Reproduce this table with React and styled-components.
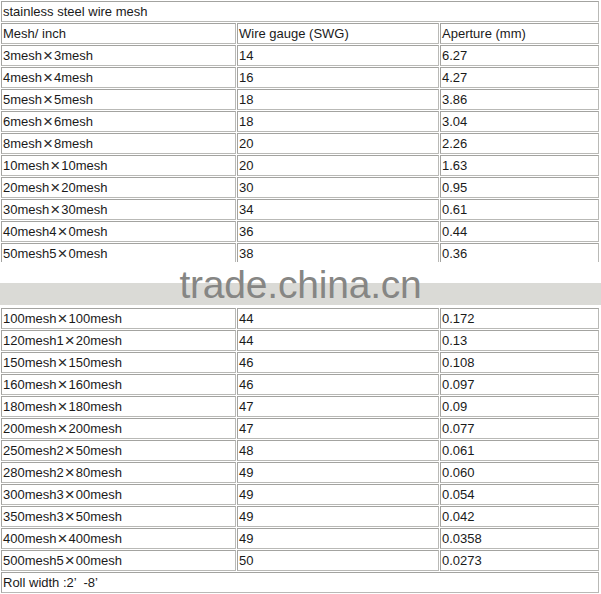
import React from 'react';
import styled, { createGlobalStyle } from 'styled-components';

const GlobalStyle = createGlobalStyle`
    html, body {
        margin: 0;
        padding: 0;
        background: #ffffff;
    }
    body {
        font-family: "Liberation Sans", Arial, sans-serif;
        color: #1a1a1a;
    }
`;

const Page = styled.div`
    width: 601px;
    height: 594px;
    overflow: hidden;
    display: flex;
    flex-direction: column;
    background: #ffffff;
`;

// crops the top table so the last row runs into the watermark
const Clip = styled.div`
    height: ${({h}) => h}px;
    overflow: hidden;
    flex-shrink: 0;
`;

const Grid = styled.div`
    display: grid;
    grid-template-columns: 235px 202px 159px;
    grid-auto-rows: 21px;
    gap: 1px;
    padding: 1px;
    width: 600px;
    box-sizing: border-box;
`;

const Cell = styled.div`
    grid-column: ${({span}) => span ? `span ${span}` : 'auto'};
    box-sizing: border-box;
    border: 1px solid #b9b9b6;
    border-top-color: #a3a3a0;
    border-left-color: #a3a3a0;
    background: #ffffff;
    padding: 0 0 1px 1px;
    display: flex;
    align-items: center;
    font-size: 13px;
    line-height: 15px;
    white-space: pre;
`;

const Times = styled.span`
    display: inline-block;
    width: 12px;
    text-align: center;
    font-size: 17px;
    line-height: 13px;
    font-weight: 300;
    color: #2a2a2a;
    vertical-align: -1px;
`;

const Watermark = styled.div`
    position: relative;
    height: 45px;
    flex-shrink: 0;
    display: flex;
    flex-direction: column;
`;

const WhitePart = styled.div`
    height: ${({h}) => h}px;
    background: #ffffff;
`;

const GrayBand = styled.div`
    height: 22px;
    background: #dadad6;
`;

const MarkText = styled.div`
    position: absolute;
    left: 0;
    right: 0;
    top: 3px;
    text-align: center;
    font-family: "Liberation Sans", Arial, sans-serif;
    font-size: 39px;
    line-height: 39px;
    color: #868684;
    letter-spacing: -0.2px;
`;

const topRows = [
    ['3mesh×3mesh', '14', '6.27'],
    ['4mesh×4mesh', '16', '4.27'],
    ['5mesh×5mesh', '18', '3.86'],
    ['6mesh×6mesh', '18', '3.04'],
    ['8mesh×8mesh', '20', '2.26'],
    ['10mesh×10mesh', '20', '1.63'],
    ['20mesh×20mesh', '30', '0.95'],
    ['30mesh×30mesh', '34', '0.61'],
    ['40mesh4×0mesh', '36', '0.44'],
    ['50mesh5×0mesh', '38', '0.36'],
];

const bottomRows = [
    ['100mesh×100mesh', '44', '0.172'],
    ['120mesh1×20mesh', '44', '0.13'],
    ['150mesh×150mesh', '46', '0.108'],
    ['160mesh×160mesh', '46', '0.097'],
    ['180mesh×180mesh', '47', '0.09'],
    ['200mesh×200mesh', '47', '0.077'],
    ['250mesh2×50mesh', '48', '0.061'],
    ['280mesh2×80mesh', '49', '0.060'],
    ['300mesh3×00mesh', '49', '0.054'],
    ['350mesh3×50mesh', '49', '0.042'],
    ['400mesh×400mesh', '49', '0.0358'],
    ['500mesh5×00mesh', '50', '0.0273'],
];

const MeshLabel = ({ text }) => {
    const [a, b] = text.split('×');
    return <span>{a}<Times>×</Times>{b}</span>;
};

const Rows = ({ rows }) => rows.map((r) => (
    <React.Fragment key={r[0]}>
        <Cell><MeshLabel text={r[0]} /></Cell>
        <Cell>{r[1]}</Cell>
        <Cell>{r[2]}</Cell>
    </React.Fragment>
));

const App = () => {
    return (
        <Page>
            <GlobalStyle />
            <Clip h={262}>
                <Grid>
                    <Cell span={3}>stainless steel wire mesh</Cell>
                    <Cell>Mesh/ inch</Cell>
                    <Cell>Wire gauge (SWG)</Cell>
                    <Cell>Aperture (mm)</Cell>
                    <Rows rows={topRows} />
                </Grid>
            </Clip>
            <Watermark>
                <WhitePart h={21} />
                <GrayBand />
                <WhitePart h={2} />
                <MarkText>trade.china.cn</MarkText>
            </Watermark>
            <Grid>
                <Rows rows={bottomRows} />
                <Cell span={3}>{'Roll width :2’  -8’'}</Cell>
            </Grid>
        </Page>
    );
};

export default App;
